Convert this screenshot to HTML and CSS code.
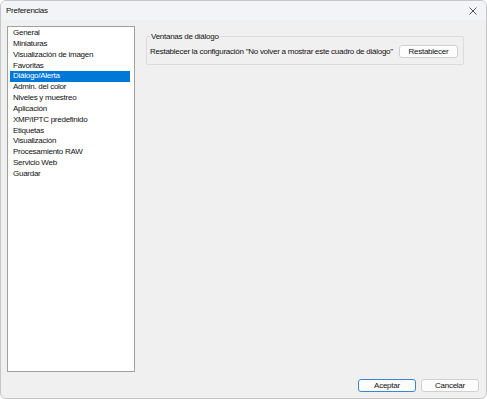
FILE: index.html
```html
<!DOCTYPE html>
<html lang="es">

<head>
  <meta charset="UTF-8" />
  <title>Preferencias</title>
  <link rel="stylesheet" href="styles.css">
</head>

<body>
  <div class="window">
    <div class="titlebar">
      <span class="title">Preferencias</span>
      <span class="close">
        <svg width="8" height="8" viewBox="0 0 8 8">
          <path d="M0.5 0.5 L7.5 7.5 M7.5 0.5 L0.5 7.5" stroke="#555" stroke-width="1" fill="none" />
        </svg>
      </span>
    </div>
    <div class="content">
      <div class="main">
        <ul class="nav-list">
          <li>General</li>
          <li>Miniaturas</li>
          <li>Visualización de imagen</li>
          <li>Favoritas</li>
          <li class="active">Diálogo/Alerta</li>
          <li>Admin. del color</li>
          <li>Niveles y muestreo</li>
          <li>Aplicación</li>
          <li>XMP/IPTC predefinido</li>
          <li>Etiquetas</li>
          <li>Visualización</li>
          <li>Procesamiento RAW</li>
          <li>Servicio Web</li>
          <li>Guardar</li>
        </ul>
        <div class="panel">
          <fieldset class="group">
            <legend>Ventanas de diálogo</legend>
            <div class="group-row">
              <span class="group-text">Restablecer la configuración "No volver a mostrar este cuadro de diálogo"</span>
              <span class="btn reset-btn">Restablecer</span>
            </div>
          </fieldset>
        </div>
      </div>
      <div class="footer">
        <span class="btn btn-default">Aceptar</span>
        <span class="btn">Cancelar</span>
      </div>
    </div>
  </div>
</body>

</html>
```

FILE: styles.css
```css
* {
  margin: 0;
  padding: 0;
  box-sizing: border-box;
}

body {
  background: #fff;
  font-family: "Liberation Sans", Arial, sans-serif;
  font-size: 8px;
  letter-spacing: -0.26px;
  color: #111;
}

.window {
  width: 487px;
  height: 399px;
  border: 1px solid #c6c6c6;
  border-radius: 6px;
  background: #f0f0f0;
  overflow: hidden;
  display: flex;
  flex-direction: column;
}

.titlebar {
  height: 19px;
  background: #f3f4f7;
  display: flex;
  align-items: center;
  justify-content: space-between;
  padding: 0 6px 0 5px;
}

.close {
  display: flex;
  width: 14px;
  justify-content: center;
}

.content {
  flex: 1;
  display: flex;
  flex-direction: column;
  padding: 6px 7px 6px 6px;
}

.main {
  flex: 1;
  display: flex;
}

.nav-list {
  list-style: none;
  flex-shrink: 0;
  width: 128px;
  height: 346px;
  background: #fff;
  border: 1px solid #a0a0a0;
  padding: 1px 4px 0 2px;
}

.nav-list li {
  height: 10.85px;
  line-height: 10.85px;
  padding-left: 3px;
  white-space: nowrap;
}

.nav-list li.active {
  background: #0078d7;
  color: #fff;
}

.panel {
  flex: 1;
  min-width: 0;
  padding: 6px 15px 0 11px;
}

.group {
  min-width: 0;
  border: 1px solid #dcdcdc;
  border-radius: 2px;
  padding: 4px 5px 6px 3px;
}

.group legend {
  margin-left: 0;
  padding: 0 1px;
}

.group-row {
  display: flex;
  align-items: center;
  gap: 6px;
}

.group-text {
  white-space: nowrap;
}

.btn {
  display: inline-flex;
  align-items: center;
  justify-content: center;
  width: 58px;
  height: 13px;
  background: #fdfdfd;
  border: 1px solid #d0d0d0;
  border-radius: 3px;
}

.reset-btn {
  width: 61px;
}

.footer {
  display: flex;
  justify-content: flex-end;
  gap: 5px;
  padding-top: 6px;
}

.btn-default {
  border-color: #3a86d6;
}
```
